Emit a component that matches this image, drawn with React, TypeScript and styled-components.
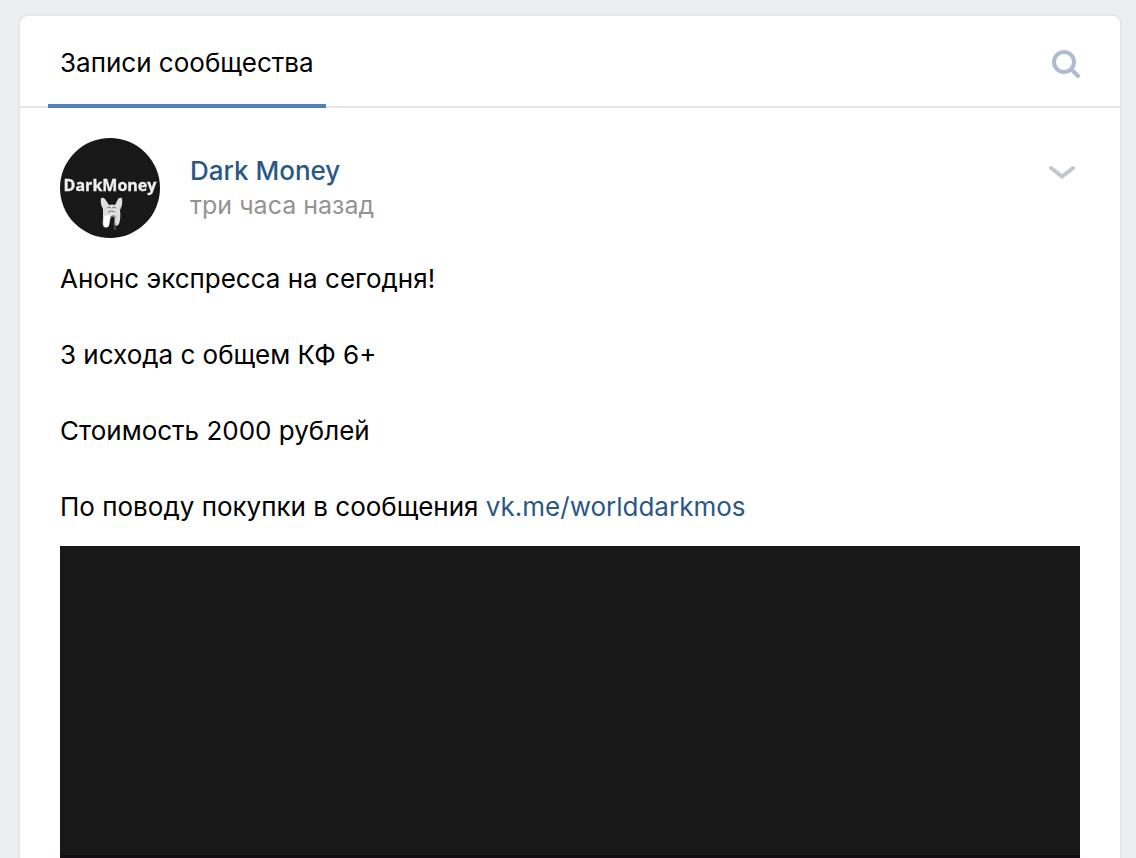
import React from "react";
import styled, { createGlobalStyle } from "styled-components";

const GlobalStyle = createGlobalStyle`
  *, *::before, *::after { box-sizing: border-box; }
  body {
    margin: 0;
    background: #edeef0;
    color: #000;
    font-family: Inter, "Liberation Sans", sans-serif;
    font-size: 26px;
    line-height: 38px;
    -webkit-font-smoothing: antialiased;
  }
`;

const Page = styled.div`
  display: flex;
  flex-direction: column;
  min-height: 100vh;
  padding: 14px 14px 0 18px;
`;

const Card = styled.main`
  flex: 1;
  display: flex;
  flex-direction: column;
  background: #fff;
  border: 2px solid #e5e6e9;
  border-bottom: 0;
  border-radius: 10px 10px 0 0;
`;

const TabBar = styled.nav`
  display: flex;
  justify-content: space-between;
  height: 92px;
  padding: 0 36px 0 28px;
  border-bottom: 2px solid #e7e8ec;
`;

const Tab = styled.a`
  display: flex;
  align-items: center;
  height: 92px;
  padding: 6px 12px 0;
  border-bottom: 4px solid #5181b8;
  color: #000;
  text-decoration: none;
`;

const IconButton = styled.button`
  display: flex;
  align-items: center;
  justify-content: center;
  width: 36px;
  height: 36px;
  padding: 0;
  border: 0;
  background: none;
  color: ${(p) => p.color};
  cursor: pointer;
`;

const SearchSlot = styled.div`
  display: flex;
  align-items: center;
  padding-top: 6px;
`;

const Post = styled.article`
  flex: 1;
  display: flex;
  flex-direction: column;
  padding: 30px 40px 0;
`;

const PostHeader = styled.header`
  display: flex;
  gap: 30px;
`;

const Avatar = styled.svg`
  flex: none;
  width: 100px;
  height: 100px;
  border-radius: 50%;
`;

const Byline = styled.div`
  flex: 1;
  display: flex;
  flex-direction: column;
  align-items: flex-start;
  padding-top: 16px;
  line-height: 34px;
`;

const Author = styled.a`
  color: #2a5885;
  font-weight: 500;
  text-decoration: none;
`;

const Time = styled.time`
  color: #939393;
  font-size: 25px;
`;

const MenuSlot = styled.div`
  padding-top: 16px;
`;

const Text = styled.div`
  padding: 22px 0 20px;
`;

const Paragraph = styled.p`
  margin: 0;
  & + & { margin-top: 38px; }
`;

const Link = styled.a`
  color: #2a5885;
  text-decoration: none;
`;

const Photo = styled.div`
  flex: 1;
  min-height: 312px;
  background: #181818;
  border-bottom: 3px solid #160d14;
`;

export default function App() {
  return (
    <Page>
      <GlobalStyle />
      <Card>
        <TabBar>
          <Tab href="#wall">Записи сообщества</Tab>
          <SearchSlot>
            <IconButton type="button" aria-label="Поиск" color="#aebbd1">
              <svg width="36" height="36" viewBox="0 0 36 36" fill="none" stroke="currentColor" strokeWidth="4" strokeLinecap="round">
                <circle cx="16" cy="16" r="10" />
                <path d="M23.5 23.5l6.5 6.5" />
              </svg>
            </IconButton>
          </SearchSlot>
        </TabBar>
        <Post>
          <PostHeader>
            <Avatar viewBox="0 0 100 100" role="img" aria-label="Dark Money">
              <defs>
                <filter id="soft" x="-10%" y="-10%" width="120%" height="120%">
                  <feGaussianBlur stdDeviation="0.6" />
                </filter>
              </defs>
              <rect width="100" height="100" fill="#181818" />
              <g filter="url(#soft)">
                <text x="50" y="53" textAnchor="middle" fill="#f0f0f0" stroke="#f0f0f0" strokeWidth="0.3" fontFamily="Open Sans, sans-serif" fontSize="16" fontWeight="700">DarkMoney</text>
                <path d="M41 60q2-1 4 1l4 6q3-1 6 0l3-6q2-2 4-1q1 7-2 12q1 8-1 14q-2 3-4 1l-1-8-3-1-2 9q-2 3-5 2q-2-2-1-8l0-10q-3-5-2-11z" fill="#dedede" />
                <path d="M44 78l0 10q2 3 5 0l1-11z" fill="#fff" />
                <path d="M47 70q2-2 4 0M52 70q2-2 4 0M48 74q4-2 7 0" stroke="#777" strokeWidth="1" fill="none" />
                <path d="M51 80l1-2 3 0-1 9" stroke="#666" strokeWidth="1" fill="none" />
                <path d="M55 85v7" stroke="#777" strokeWidth="1" />
              </g>
            </Avatar>
            <Byline>
              <Author href="#darkmoney">Dark Money</Author>
              <Time>три часа назад</Time>
            </Byline>
            <MenuSlot>
              <IconButton type="button" aria-label="Действия" color="#c0c7cd">
                <svg width="36" height="36" viewBox="0 0 36 36" fill="none" stroke="currentColor" strokeWidth="4" strokeLinecap="round">
                  <path d="M7 14l11 8.5 11-8.5" />
                </svg>
              </IconButton>
            </MenuSlot>
          </PostHeader>
          <Text>
            <Paragraph>Анонс экспресса на сегодня!</Paragraph>
            <Paragraph>3 исхода с общем КФ 6+</Paragraph>
            <Paragraph>Стоимость 2000 рублей</Paragraph>
            <Paragraph>
              По поводу покупки в сообщения <Link href="#message">vk.me/worlddarkmos</Link>
            </Paragraph>
          </Text>
          <Photo role="img" aria-label="Фотография" />
        </Post>
      </Card>
    </Page>
  );
}
